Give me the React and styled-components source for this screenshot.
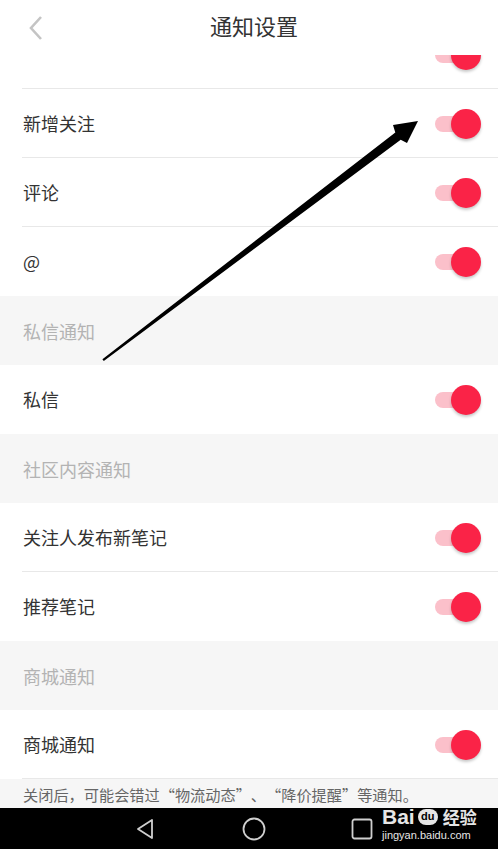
import React from "react";
import styled, { createGlobalStyle } from "styled-components";

const Global = createGlobalStyle`
  html, body { margin: 0; padding: 0; background: #fff; overflow: hidden; }
  body { font-family: "Noto Sans CJK SC", "Noto Sans", sans-serif; }
`;

const Screen = styled.div`
  position: relative;
  width: 498px;
  height: 849px;
  display: flex;
  flex-direction: column;
  background: #fff;
  overflow: hidden;
`;

const Header = styled.header`
  height: 55px;
  flex: none;
  display: grid;
  grid-template-columns: 70px 1fr 70px;
  align-items: center;
  background: #fff;
  position: relative;
  z-index: 2;
`;

const Back = styled.div`
  display: flex;
  align-items: center;
  height: 55px;
  padding-left: 27px;
  box-sizing: border-box;
`;

const Title = styled.h1`
  margin: 0;
  text-align: center;
  font-size: 22px;
  font-weight: 400;
  color: #333;
  line-height: 55px;
  position: relative;
  top: -2px;
  left: 5px;
`;

const Clip = styled.div`
  height: 34px;
  flex: none;
  overflow: hidden;
`;

const ClipInner = styled.div`
  margin-top: -35px;
`;

const List = styled.div`
  display: flex;
  flex-direction: column;
  flex: 1;
`;

const Row = styled.div`
  height: 69px;
  flex: none;
  display: flex;
  align-items: center;
  justify-content: space-between;
  padding-left: 23px;
  padding-right: 17px;
  box-sizing: border-box;
  background: #fff;
  position: relative;
  &::after {
    content: "";
    position: absolute;
    left: 22px;
    right: 0;
    bottom: 0;
    height: 1px;
    background: ${(p) => (p.$noLine ? "transparent" : "#e8e8e8")};
  }
`;

const Label = styled.span`
  font-size: 18px;
  color: #333;
  position: relative;
  top: -1px;
`;

const Section = styled.div`
  height: 69px;
  flex: none;
  display: flex;
  align-items: center;
  padding-left: 23px;
  background: #f6f6f6;
  font-size: 18px;
  color: #b3b3b3;
`;

const Toggle = styled.div`
  position: relative;
  width: 46px;
  height: 30px;
  flex: none;
`;

const Track = styled.div`
  position: absolute;
  left: 0;
  top: 7px;
  width: 38px;
  height: 16px;
  border-radius: 8px;
  background: #fbc0ca;
`;

const Knob = styled.div`
  position: absolute;
  right: 0;
  top: 0;
  width: 30px;
  height: 30px;
  border-radius: 50%;
  background: #fa2347;
  box-shadow: 0 2px 3px rgba(0, 0, 0, 0.22);
`;

const Footer = styled.div`
  height: 29px;
  flex: none;
  background: #f6f6f6;
  display: flex;
  align-items: center;
  padding-left: 23px;
  font-size: 15.2px;
  color: #666;
  white-space: nowrap;
`;

const Quote = styled.span`
  display: inline-block;
  width: 1em;
  text-align: ${(p) => (p.$open ? "right" : "left")};
`;

const NavBar = styled.nav`
  height: 41px;
  flex: none;
  background: #000;
  display: flex;
  align-items: center;
  padding-left: 135px;
`;

const NavIcon = styled.div`
  display: flex;
  margin-left: ${(p) => p.$gap}px;
`;

const ArrowLayer = styled.svg`
  position: absolute;
  left: 0;
  top: 0;
  pointer-events: none;
  z-index: 3;
`;

const Watermark = styled.div`
  position: absolute;
  left: 382px;
  top: 806px;
  z-index: 4;
  display: flex;
  flex-direction: column;
  color: #e6e6e6;
  font-family: "Liberation Sans", "Noto Sans CJK SC", sans-serif;
`;

const WmTop = styled.div`
  display: flex;
  align-items: center;
  gap: 3px;
  font-size: 21px;
  font-weight: 700;
  line-height: 21px;
`;

const Paw = styled.span`
  display: inline-flex;
  align-items: center;
  justify-content: center;
  width: 20px;
  height: 16px;
  border-radius: 8px;
  background: #e6e6e6;
  color: #000;
  font-size: 11px;
  font-weight: 700;
`;

const WmCn = styled.span`
  font-family: "Noto Sans CJK SC", sans-serif;
  font-size: 17px;
  font-weight: 700;
  margin-left: 2px;
`;

const WmUrl = styled.div`
  font-size: 11px;
  line-height: 14px;
  margin-top: 1px;
`;

const Switch = () => (
  <Toggle>
    <Track />
    <Knob />
  </Toggle>
);

const items = [
  { t: "row", label: "新增关注" },
  { t: "row", label: "评论" },
  { t: "row", label: "@", noLine: true },
  { t: "sec", label: "私信通知" },
  { t: "row", label: "私信", noLine: true },
  { t: "sec", label: "社区内容通知" },
  { t: "row", label: "关注人发布新笔记" },
  { t: "row", label: "推荐笔记", noLine: true },
  { t: "sec", label: "商城通知" },
  { t: "row", label: "商城通知" },
];

export default function App() {
  return (
    <Screen>
      <Global />
      <Header>
        <Back>
          <svg width="18" height="26" viewBox="0 0 18 26">
            <path d="M14 2 L4 13 L14 24" fill="none" stroke="#c4c4c4" strokeWidth="2.6" />
          </svg>
        </Back>
        <Title>通知设置</Title>
        <div />
      </Header>
      <Clip>
        <ClipInner>
          <Row>
            <span />
            <Switch />
          </Row>
        </ClipInner>
      </Clip>
      <List>
        {items.map((it, i) =>
          it.t === "row" ? (
            <Row key={i} $noLine={it.noLine}>
              <Label>{it.label}</Label>
              <Switch />
            </Row>
          ) : (
            <Section key={i}>{it.label}</Section>
          )
        )}
      </List>
      <Footer>
        关闭后，可能会错过<Quote $open>“</Quote>物流动态<Quote>”</Quote>、<Quote $open>“</Quote>降价提醒<Quote>”</Quote>等通知。
      </Footer>
      <NavBar>
        <NavIcon $gap={0}>
          <svg width="20" height="22" viewBox="0 0 20 22">
            <path d="M17 2 L3 11 L17 20 Z" fill="none" stroke="#cfcfcf" strokeWidth="1.8" strokeLinejoin="round" />
          </svg>
        </NavIcon>
        <NavIcon $gap={87}>
          <svg width="24" height="24" viewBox="0 0 24 24">
            <circle cx="12" cy="12" r="10.5" fill="none" stroke="#cfcfcf" strokeWidth="1.8" />
          </svg>
        </NavIcon>
        <NavIcon $gap={85}>
          <svg width="22" height="22" viewBox="0 0 22 22">
            <rect x="1.5" y="1.5" width="19" height="19" rx="2" fill="none" stroke="#cfcfcf" strokeWidth="1.8" />
          </svg>
        </NavIcon>
      </NavBar>
      <ArrowLayer width="498" height="849" viewBox="0 0 498 849">
        <polygon
          points="102.4,359.2 103.8,360.9 400.7,139.8 407,143 418,121 393,125 395.3,132.4"
          fill="#000"
        />
      </ArrowLayer>
      <Watermark>
        <WmTop>
          <span>Bai</span>
          <Paw>du</Paw>
          <WmCn>经验</WmCn>
        </WmTop>
        <WmUrl>jingyan.baidu.com</WmUrl>
      </Watermark>
    </Screen>
  );
}
